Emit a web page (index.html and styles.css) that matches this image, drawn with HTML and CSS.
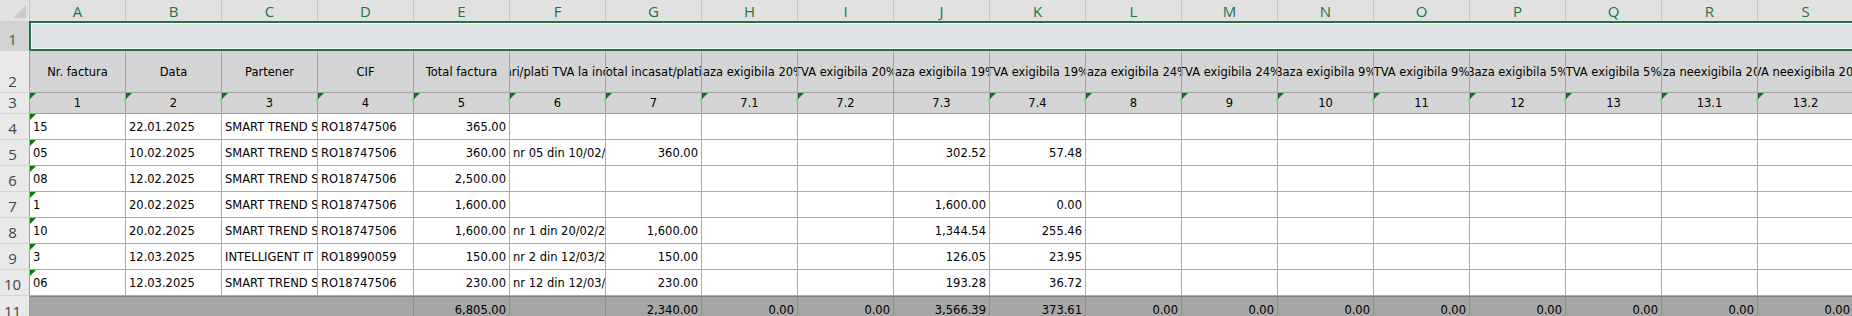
FILE: index.html
```html
<!DOCTYPE html>
<html lang="ro">
<head>
    <meta charset="UTF-8">
    <title>Jurnal TVA la incasare</title>
    <link rel="stylesheet" href="styles.css">
</head>
<body>
    <div class="sheet">
        <!-- Column headers -->
        <div class="row hdr">
            <div class="corner"></div>
            <div class="ch">A</div><div class="ch">B</div><div class="ch">C</div><div class="ch">D</div>
            <div class="ch">E</div><div class="ch">F</div><div class="ch">G</div><div class="ch">H</div>
            <div class="ch">I</div><div class="ch">J</div><div class="ch">K</div><div class="ch">L</div>
            <div class="ch">M</div><div class="ch">N</div><div class="ch">O</div><div class="ch">P</div>
            <div class="ch">Q</div><div class="ch">R</div><div class="ch">S</div>
        </div>

        <!-- Row 1 (selected) -->
        <div class="row r1">
            <div class="rh sel">1</div>
            <div class="band"></div>
        </div>

        <!-- Row 2: titles -->
        <div class="row r2">
            <div class="rh">2</div>
            <div class="c th"><span>Nr. factura</span></div>
            <div class="c th"><span>Data</span></div>
            <div class="c th"><span>Partener</span></div>
            <div class="c th"><span>CIF</span></div>
            <div class="c th"><span>Total factura</span></div>
            <div class="c th"><span>Incasari/plati TVA la incasare</span></div>
            <div class="c th"><span>Total incasat/platit</span></div>
            <div class="c th"><span>Baza exigibila 20%</span></div>
            <div class="c th"><span>TVA exigibila 20%</span></div>
            <div class="c th"><span>Baza exigibila 19%</span></div>
            <div class="c th"><span>TVA exigibila 19%</span></div>
            <div class="c th"><span>Baza exigibila 24%</span></div>
            <div class="c th"><span>TVA exigibila 24%</span></div>
            <div class="c th"><span>Baza exigibila 9%</span></div>
            <div class="c th"><span>TVA exigibila 9%</span></div>
            <div class="c th"><span>Baza exigibila 5%</span></div>
            <div class="c th"><span>TVA exigibila 5%</span></div>
            <div class="c th"><span>Baza neexigibila 20%</span></div>
            <div class="c th"><span>TVA neexigibila 20%</span></div>
        </div>

        <!-- Row 3: column numbers -->
        <div class="row r3">
            <div class="rh">3</div>
            <div class="c th err">1</div>
            <div class="c th err">2</div>
            <div class="c th err">3</div>
            <div class="c th err">4</div>
            <div class="c th err">5</div>
            <div class="c th err">6</div>
            <div class="c th err">7</div>
            <div class="c th err">7.1</div>
            <div class="c th err">7.2</div>
            <div class="c th">7.3</div>
            <div class="c th err">7.4</div>
            <div class="c th err">8</div>
            <div class="c th err">9</div>
            <div class="c th err">10</div>
            <div class="c th err">11</div>
            <div class="c th err">12</div>
            <div class="c th err">13</div>
            <div class="c th err">13.1</div>
            <div class="c th err">13.2</div>
        </div>

        <!-- Data rows -->
        <div class="row rd">
            <div class="rh">4</div>
            <div class="c err">15</div>
            <div class="c">22.01.2025</div>
            <div class="c">SMART TREND SRL</div>
            <div class="c">RO18747506</div>
            <div class="c n">365.00</div>
            <div class="c"></div><div class="c"></div><div class="c"></div><div class="c"></div>
            <div class="c"></div><div class="c"></div><div class="c"></div><div class="c"></div>
            <div class="c"></div><div class="c"></div><div class="c"></div><div class="c"></div>
            <div class="c"></div><div class="c"></div>
        </div>
        <div class="row rd">
            <div class="rh">5</div>
            <div class="c err">05</div>
            <div class="c">10.02.2025</div>
            <div class="c">SMART TREND SRL</div>
            <div class="c">RO18747506</div>
            <div class="c n">360.00</div>
            <div class="c">nr 05 din 10/02/2025</div>
            <div class="c n">360.00</div>
            <div class="c"></div><div class="c"></div>
            <div class="c n">302.52</div>
            <div class="c n">57.48</div>
            <div class="c"></div><div class="c"></div><div class="c"></div><div class="c"></div>
            <div class="c"></div><div class="c"></div><div class="c"></div><div class="c"></div>
        </div>
        <div class="row rd">
            <div class="rh">6</div>
            <div class="c err">08</div>
            <div class="c">12.02.2025</div>
            <div class="c">SMART TREND SRL</div>
            <div class="c">RO18747506</div>
            <div class="c n">2,500.00</div>
            <div class="c"></div><div class="c"></div><div class="c"></div><div class="c"></div>
            <div class="c"></div><div class="c"></div><div class="c"></div><div class="c"></div>
            <div class="c"></div><div class="c"></div><div class="c"></div><div class="c"></div>
            <div class="c"></div><div class="c"></div>
        </div>
        <div class="row rd">
            <div class="rh">7</div>
            <div class="c err">1</div>
            <div class="c">20.02.2025</div>
            <div class="c">SMART TREND SRL</div>
            <div class="c">RO18747506</div>
            <div class="c n">1,600.00</div>
            <div class="c"></div><div class="c"></div><div class="c"></div><div class="c"></div>
            <div class="c n">1,600.00</div>
            <div class="c n">0.00</div>
            <div class="c"></div><div class="c"></div><div class="c"></div><div class="c"></div>
            <div class="c"></div><div class="c"></div><div class="c"></div><div class="c"></div>
        </div>
        <div class="row rd">
            <div class="rh">8</div>
            <div class="c err">10</div>
            <div class="c">20.02.2025</div>
            <div class="c">SMART TREND SRL</div>
            <div class="c">RO18747506</div>
            <div class="c n">1,600.00</div>
            <div class="c">nr 1 din 20/02/2025</div>
            <div class="c n">1,600.00</div>
            <div class="c"></div><div class="c"></div>
            <div class="c n">1,344.54</div>
            <div class="c n">255.46</div>
            <div class="c"></div><div class="c"></div><div class="c"></div><div class="c"></div>
            <div class="c"></div><div class="c"></div><div class="c"></div><div class="c"></div>
        </div>
        <div class="row rd">
            <div class="rh">9</div>
            <div class="c err">3</div>
            <div class="c">12.03.2025</div>
            <div class="c">INTELLIGENT IT SRL</div>
            <div class="c">RO18990059</div>
            <div class="c n">150.00</div>
            <div class="c">nr 2 din 12/03/2025</div>
            <div class="c n">150.00</div>
            <div class="c"></div><div class="c"></div>
            <div class="c n">126.05</div>
            <div class="c n">23.95</div>
            <div class="c"></div><div class="c"></div><div class="c"></div><div class="c"></div>
            <div class="c"></div><div class="c"></div><div class="c"></div><div class="c"></div>
        </div>
        <div class="row rd">
            <div class="rh">10</div>
            <div class="c err">06</div>
            <div class="c">12.03.2025</div>
            <div class="c">SMART TREND SRL</div>
            <div class="c">RO18747506</div>
            <div class="c n">230.00</div>
            <div class="c">nr 12 din 12/03/2025</div>
            <div class="c n">230.00</div>
            <div class="c"></div><div class="c"></div>
            <div class="c n">193.28</div>
            <div class="c n">36.72</div>
            <div class="c"></div><div class="c"></div><div class="c"></div><div class="c"></div>
            <div class="c"></div><div class="c"></div><div class="c"></div><div class="c"></div>
        </div>

        <!-- Totals -->
        <div class="row tot">
            <div class="rh">11</div>
            <div class="c span4"></div>
            <div class="c n">6,805.00</div>
            <div class="c"></div>
            <div class="c n">2,340.00</div>
            <div class="c n">0.00</div>
            <div class="c n">0.00</div>
            <div class="c n">3,566.39</div>
            <div class="c n">373.61</div>
            <div class="c n">0.00</div>
            <div class="c n">0.00</div>
            <div class="c n">0.00</div>
            <div class="c n">0.00</div>
            <div class="c n">0.00</div>
            <div class="c n">0.00</div>
            <div class="c n">0.00</div>
            <div class="c n">0.00</div>
        </div>
    </div>
</body>
</html>
```

FILE: styles.css
```css
:root {
    --green: #217346;
    --err: #008000;
    --grid: #ababab;
    --head-bg: #d4d4d4;
    --total-bg: #a6a6a6;
    --rh-bg: #e9e9e9;
}
body {
    margin: 0;
    background: #fff;
    font-family: 'DejaVu Sans', Verdana, sans-serif;
    font-size: 11.5px;
    color: #000;
    overflow: hidden;
}
.sheet {
    width: 1852px;
    height: 316px;
    overflow: hidden;
}
.row {
    display: grid;
    grid-template-columns: 30px repeat(19, 96px);
}
/* Headers */
.hdr {
    height: 21px;
    background: #e1e1e1;
}
.corner {
    position: relative;
    border-right: 1px solid #c6c6c6;
}
.corner::after {
    content: "";
    position: absolute;
    right: 3px;
    bottom: 3px;
    width: 13px;
    height: 13px;
    background: #cacaca;
    clip-path: polygon(100% 0, 100% 100%, 0 100%);
}
.ch {
    display: flex;
    align-items: center;
    justify-content: center;
    border-right: 1px solid #c6c6c6;
    font-family: 'Open Sans', 'Noto Sans', sans-serif;
    font-size: 15px;
    color: var(--green);
    padding-top: 1px;
}
.rh {
    display: flex;
    align-items: flex-end;
    justify-content: center;
    padding: 0 4px 2px 0;
    background: var(--rh-bg);
    border-right: 1px solid #9e9e9e;
    border-bottom: 1px solid #d4d4d4;
    font-family: 'Open Sans', 'Noto Sans', sans-serif;
    font-size: 15px;
    line-height: 18px;
    color: #444;
}
.rh.sel {
    background: #d2d2d2;
    color: var(--green);
    border-right-color: var(--green);
}
/* Selected row 1 */
.r1 {
    height: 30px;
}
.band {
    grid-column: 2 / -1;
    background: #dfe2e6;
    border-top: 2px solid var(--green);
    border-bottom: 2px solid var(--green);
    border-left: 1px solid var(--green);
    box-shadow: inset 0 1px 0 #fff, inset 0 -1px 0 #fff, inset 1px 0 0 #fff;
}
.r2 { height: 42px; }
.r3 { height: 21px; }
.rd { height: 26px; }
.tot { height: 26px; }

/* Cells */
.c {
    position: relative;
    display: flex;
    align-items: center;
    padding: 1px 3px 0 3px;
    border-right: 1px solid var(--grid);
    border-bottom: 1px solid var(--grid);
    white-space: nowrap;
    overflow: hidden;
    min-width: 0;
}
.n {
    justify-content: flex-end;
}
.th {
    justify-content: center;
    padding: 0;
    background: var(--head-bg);
    border-color: #a2a2a2;
}
.th span {
    flex-shrink: 0;
}
.err::before {
    content: "";
    position: absolute;
    top: 0;
    left: 0;
    width: 6px;
    height: 6px;
    background: var(--err);
    clip-path: polygon(0 0, 100% 0, 0 100%);
}
.tot .c {
    background: var(--total-bg);
    border-top: 1px solid #808080;
    border-right-color: #8c8c8c;
    border-bottom: none;
}
.tot .rh {
    border-bottom: none;
}
.span4 {
    grid-column: span 4;
}
```
